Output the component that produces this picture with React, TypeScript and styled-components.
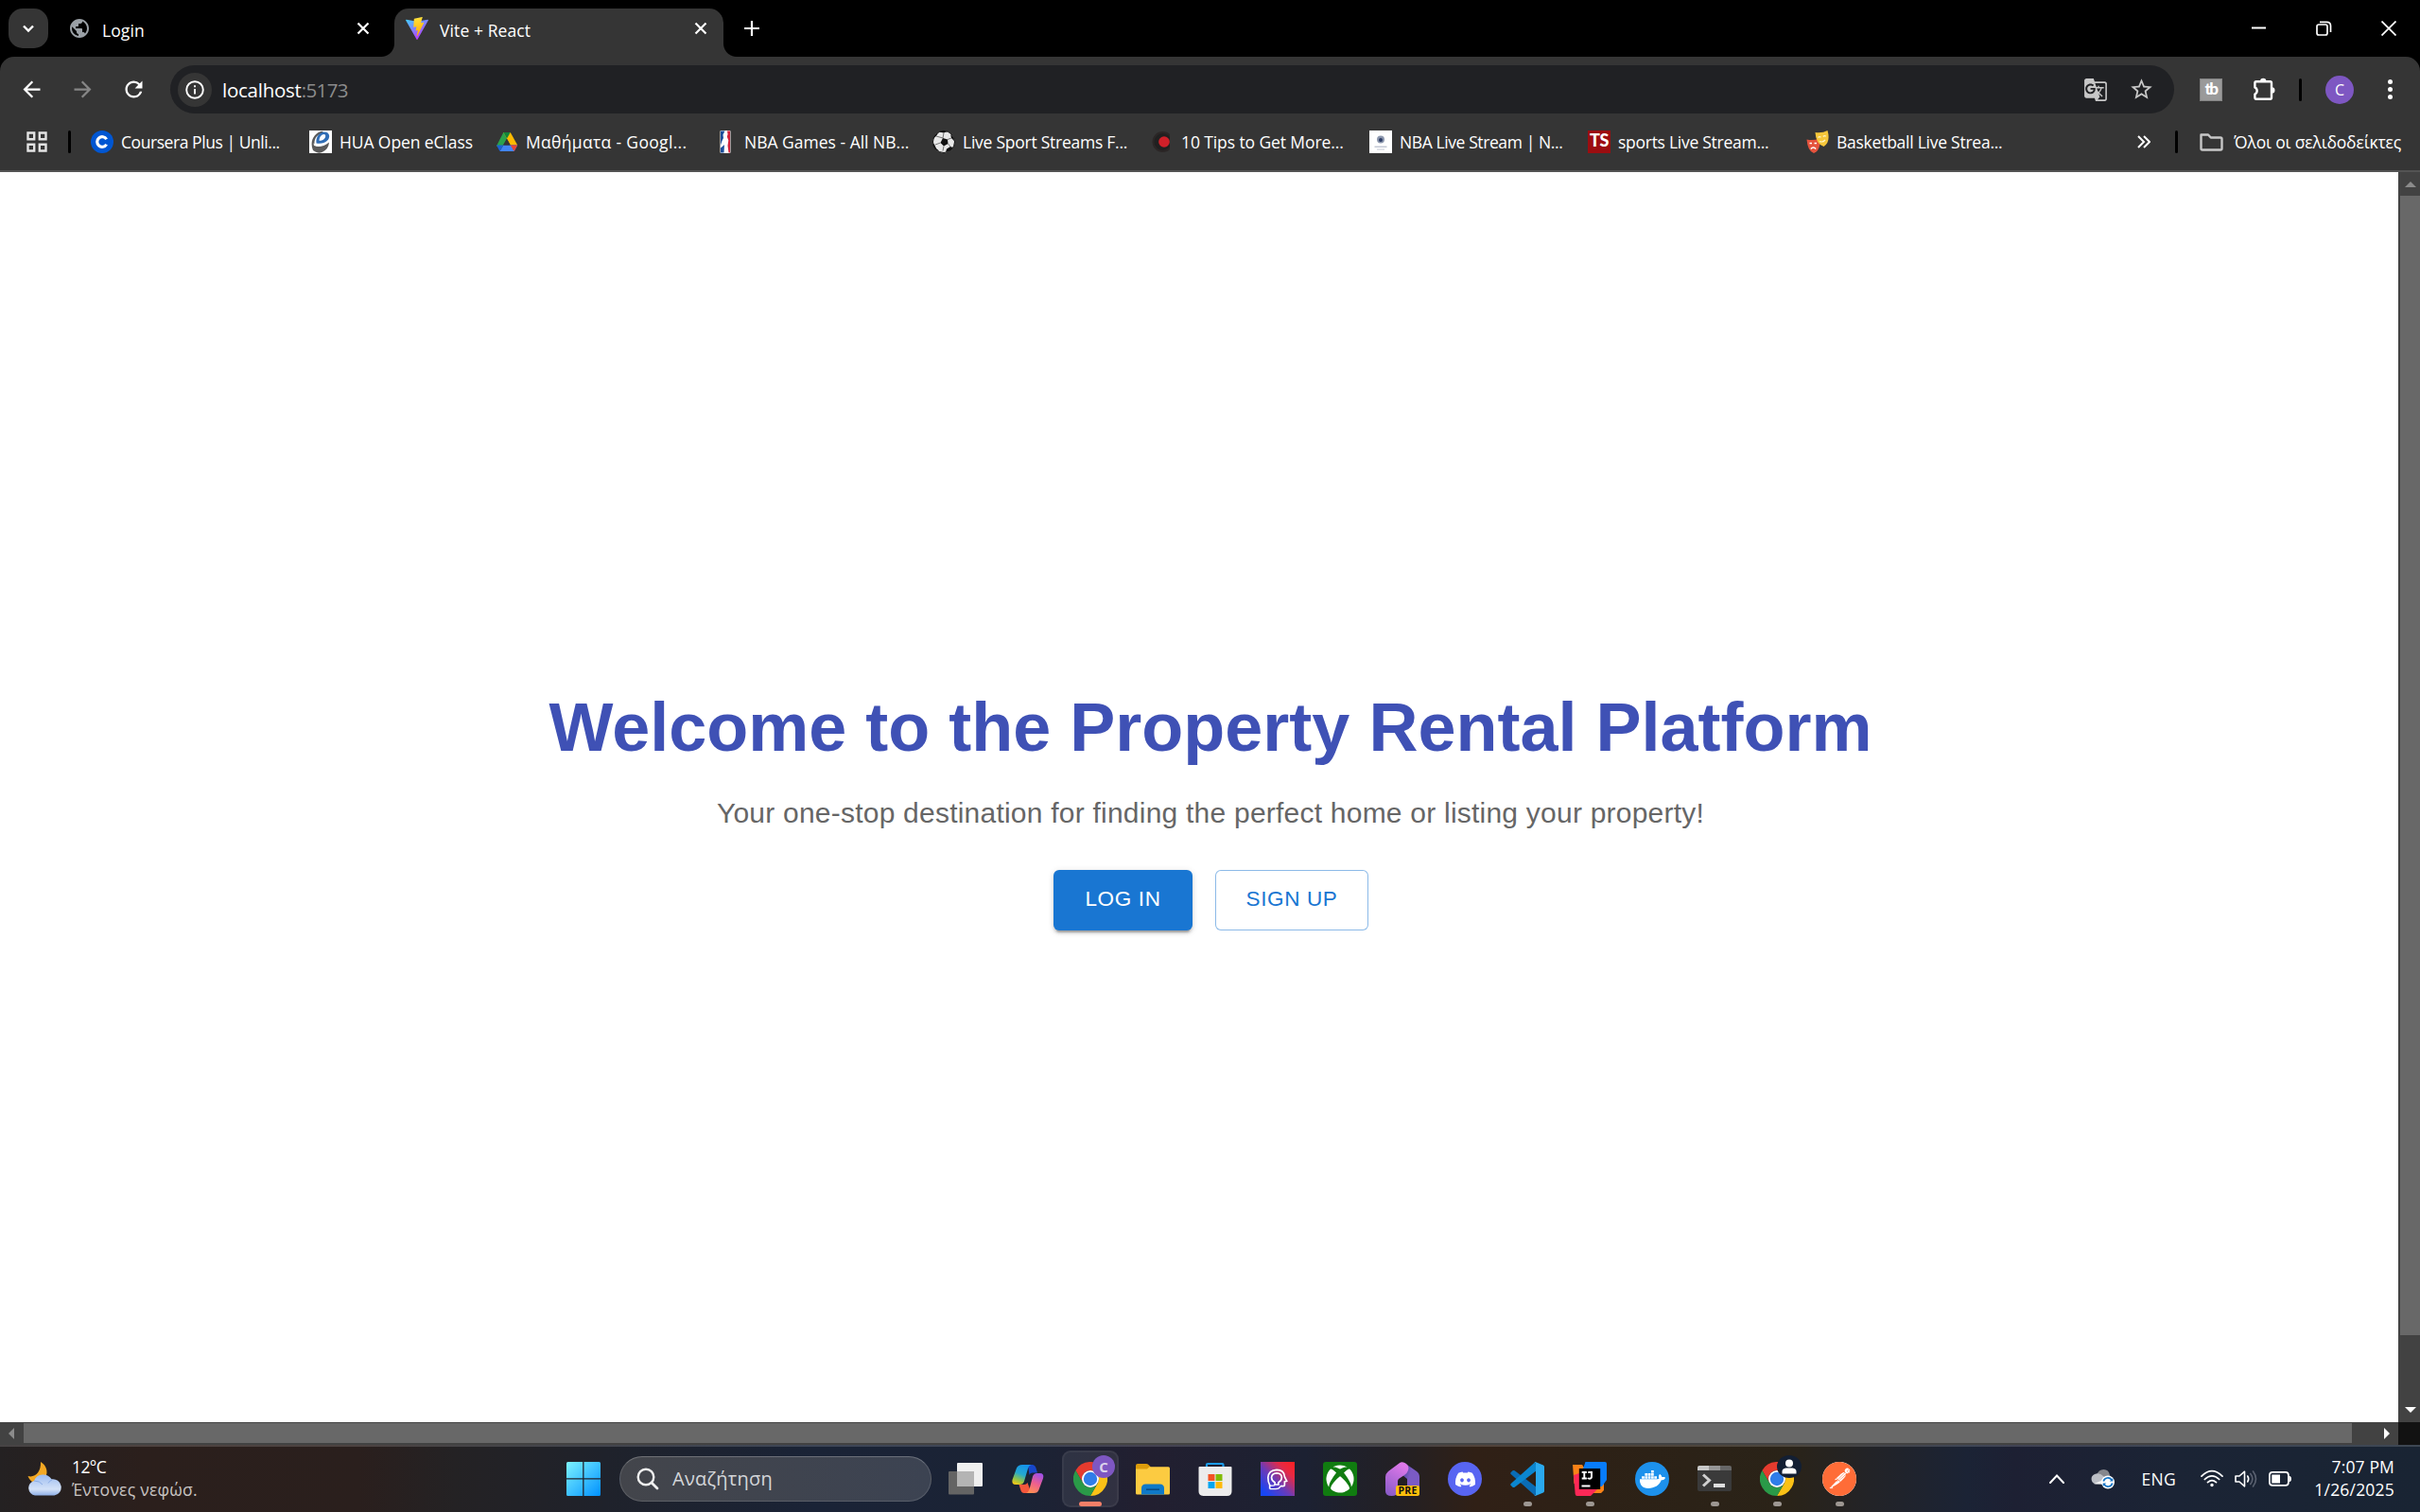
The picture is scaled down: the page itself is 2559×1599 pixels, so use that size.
import React from "react";
import styled, { createGlobalStyle, css } from "styled-components";
import { MdArrowBack, MdArrowForward, MdRefresh, MdPublic, MdGTranslate, MdStarBorder } from "react-icons/md";
import { FaDiscord, FaDocker, FaXbox } from "react-icons/fa";
import { SiPostman } from "react-icons/si";

const GlobalStyle = createGlobalStyle`
  * { box-sizing: border-box; }
  html, body { margin: 0; height: 100%; overflow: hidden; background: #000; }
  svg { display: block; flex: none; }
`;

const ui = `"Open Sans", "Noto Sans", sans-serif`;
const chromeBg = "#353535";

const Screen = styled.div`
  width: 2559px;
  height: 1599px;
  display: flex;
  flex-direction: column;
  overflow: hidden;
  font-family: ${ui};
  color: #fff;
`;

/* Tab strip */
const TabStrip = styled.header`
  height: 60px;
  flex: none;
  display: flex;
  align-items: flex-end;
  padding-left: 9px;
  background: #000;
`;
const TabSearch = styled.button`
  width: 42px;
  height: 42px;
  margin: 0 9px 9px 0;
  padding: 0;
  border: 0;
  border-radius: 15px;
  background: ${chromeBg};
  display: flex;
  align-items: center;
  justify-content: center;
`;
const Tab = styled.div<{ $active?: boolean }>`
  position: relative;
  width: ${(p) => (p.$active ? 348 : 357)}px;
  height: 51px;
  padding: 0 ${(p) => (p.$active ? 12 : 21)}px 9px 12px;
  display: flex;
  align-items: center;
  gap: 12px;
  ${(p) =>
    p.$active &&
    css`
      background: ${chromeBg};
      border-radius: 15px 15px 0 0;
      &::before,
      &::after {
        content: "";
        position: absolute;
        bottom: 0;
        width: 14px;
        height: 14px;
      }
      &::before {
        left: -14px;
        background: radial-gradient(circle at 0 0, transparent 13.5px, ${chromeBg} 14.5px);
      }
      &::after {
        right: -14px;
        background: radial-gradient(circle at 100% 0, transparent 13.5px, ${chromeBg} 14.5px);
      }
    `}
`;
const Label = styled.span<{ $track?: number; $size?: number; $color?: string }>`
  font-size: ${(p) => p.$size ?? 17.5}px;
  line-height: 24px;
  letter-spacing: ${(p) => p.$track ?? 0}px;
  color: ${(p) => p.$color ?? "#fff"};
  white-space: nowrap;
`;
const TabTitle = styled(Label)`
  flex: 1;
  padding-top: 3px;
`;
const NewTab = styled.div`
  height: 51px;
  padding: 9px 0 0 18px;
`;
const WindowControls = styled.div`
  margin-left: auto;
  height: 60px;
  display: flex;
  gap: 52px;
  padding: 22px 25px 0 0;
`;

/* Toolbar */
const ToolbarBack = styled.div`
  background: #000;
  flex: none;
`;
const Toolbar = styled.div`
  height: 69px;
  display: flex;
  align-items: center;
  padding-left: 20px;
  background: ${chromeBg};
  border-radius: 15px 15px 0 0;
`;
const NavButtons = styled.nav`
  display: flex;
  gap: 27px;
  width: 160px;
`;
const Omnibox = styled.div`
  width: 2119px;
  height: 51px;
  border-radius: 26px;
  background: #202124;
  display: flex;
  align-items: center;
  padding: 0 21px 0 8px;
`;
const SiteInfo = styled.span`
  width: 36px;
  height: 36px;
  border-radius: 50%;
  background: ${chromeBg};
  display: flex;
  align-items: center;
  justify-content: center;
  margin-right: 11px;
`;
const OmniActions = styled.div`
  margin-left: auto;
  display: flex;
  align-items: center;
  gap: 22px;
  color: #c7c7c7;
`;
const Extensions = styled.div`
  display: flex;
  align-items: center;
  margin-left: 27px;
`;
const Extension = styled.span`
  width: 24px;
  height: 24px;
  background: #9a9a9a;
  border: 1px solid #848484;
  color: #fff;
  font: 900 17px/20px "Lato", sans-serif;
  letter-spacing: -1.5px;
  text-align: center;
  margin-right: 32px;
`;
const Divider = styled.i<{ $gap: string }>`
  width: 3px;
  height: 24px;
  border-radius: 2px;
  background: #000;
  margin: ${(p) => p.$gap};
`;
const Avatar = styled.span<{ $size: number }>`
  width: ${(p) => p.$size}px;
  height: ${(p) => p.$size}px;
  border-radius: 50%;
  background: #7e57c2;
  color: #fff;
  font-size: 16px;
  line-height: ${(p) => p.$size}px;
  text-align: center;
  margin-right: 36px;
`;
const MenuDots = styled.span`
  display: flex;
  flex-direction: column;
  gap: 3px;
  &::before, &::after, i {
    content: "";
    width: 5px;
    height: 5px;
    border-radius: 50%;
    background: #fff;
  }
`;

/* Bookmarks */
const BookmarkBar = styled.div`
  height: 53px;
  flex: none;
  display: flex;
  align-items: center;
  padding: 0 0 9px 28px;
  background: ${chromeBg};
  border-bottom: 2px solid #545454;
`;
const Bookmark = styled.div<{ $width: number }>`
  width: ${(p) => p.$width}px;
  flex: none;
  display: flex;
  align-items: center;
  gap: 8px;
`;
const BarEnd = styled.div`
  margin-left: auto;
  display: flex;
  align-items: center;
  padding-right: 20px;
`;
const AllBookmarks = styled.div`
  display: flex;
  align-items: center;
  gap: 11px;
`;

/* Page */
const Viewport = styled.div`
  flex: 1;
  min-height: 0;
  display: grid;
  grid-template: 1322px 24px / 2536px 23px;
`;
const Page = styled.main`
  overflow: hidden;
  background: #fff;
`;
const Hero = styled.section`
  width: 2560px;
  padding-top: 544px;
  display: flex;
  flex-direction: column;
  align-items: center;
  font-family: "Liberation Sans", Arial, sans-serif;
`;
const Heading = styled.h1`
  margin: 0 0 24px;
  font-size: 72px;
  line-height: 86px;
  font-weight: 700;
  color: #3f51b5;
  white-space: nowrap;
`;
const Tagline = styled.p`
  margin: 0 0 36px;
  font-size: 30px;
  line-height: 48px;
  letter-spacing: 0.225px;
  color: #666;
  white-space: nowrap;
`;
const Actions = styled.div`
  display: flex;
  gap: 24px;
  padding-left: 1px;
`;
const Button = styled.button<{ $outlined?: boolean }>`
  height: 64px;
  width: ${(p) => (p.$outlined ? 162 : 147)}px;
  padding: 0 0 3px;
  font: 400 22.5px/39px "Liberation Sans", Arial, sans-serif;
  letter-spacing: 0.643px;
  border-radius: 6px;
  border: ${(p) => (p.$outlined ? "1px solid rgba(25, 118, 210, 0.5)" : "0")};
  background: ${(p) => (p.$outlined ? "#fff" : "#1976d2")};
  color: ${(p) => (p.$outlined ? "#1976d2" : "#fff")};
  box-shadow: ${(p) =>
    p.$outlined
      ? "none"
      : "0 4.5px 1.5px -3px rgba(0,0,0,.2), 0 3px 3px rgba(0,0,0,.14), 0 1.5px 7.5px rgba(0,0,0,.12)"};
`;
const VScroll = styled.div`
  background: #424242;
  display: flex;
  flex-direction: column;
  align-items: center;
  justify-content: space-between;
  padding: 10px 0 10px 2px;
`;
const VThumb = styled.i`
  width: 21px;
  height: 1205px;
  margin: 9px 0 auto;
  background: #686868;
`;
const HScroll = styled.div`
  background: #424242;
  display: flex;
  align-items: center;
  padding: 0 9px;
`;
const HThumb = styled.i`
  width: 2462px;
  height: 21px;
  margin: 0 auto 1px 10px;
  background: #686868;
`;
const Corner = styled.div`
  background: #121212;
`;

/* Taskbar */
const Taskbar = styled.footer`
  height: 71px;
  flex: none;
  display: flex;
  align-items: center;
  padding-bottom: 1px;
  border-top: 2px solid rgba(255, 255, 255, 0.16);
  background: linear-gradient(
    90deg,
    #242122 0,
    #2b1f1c 150px,
    #2a1f1d 380px,
    #242224 480px,
    #1f222b 640px,
    #1a2336 860px,
    #1b2335 1080px,
    #221f30 1215px,
    #1c2132 1380px,
    #232024 1480px,
    #302016 1560px,
    #2d2116 1680px,
    #2a2318 1890px,
    #232326 1970px,
    #1b2335 2080px,
    #1d2033 2130px,
    #1b2435 2300px,
    #192433 2559px
  );
  background-origin: border-box;
`;
const Weather = styled.div`
  width: 584px;
  padding-left: 29px;
  display: flex;
  align-items: center;
  gap: 10px;
`;
const Lines = styled.div<{ $end?: boolean }>`
  display: flex;
  flex-direction: column;
  align-items: ${(p) => (p.$end ? "flex-end" : "flex-start")};
  padding-bottom: 2px;
`;
const Slot = styled.div`
  position: relative;
  width: 66px;
  height: 68px;
  flex: none;
  display: flex;
  align-items: center;
  justify-content: center;
`;
const ActiveTile = styled(Slot)`
  width: 60px;
  height: 60px;
  margin: 0 3px;
  border-radius: 9px;
  background: rgba(255, 255, 255, 0.08);
  border: 2px solid rgba(255, 255, 255, 0.05);
`;
const Running = styled.i<{ $active?: boolean }>`
  position: absolute;
  bottom: ${(p) => (p.$active ? -1 : 5)}px;
  width: ${(p) => (p.$active ? 24 : 9)}px;
  height: 5px;
  border-radius: 3px;
  background: ${(p) => (p.$active ? "#f47f68" : "#9d9792")};
`;
const Badge = styled.span<{ $dark?: boolean; $inTile?: boolean }>`
  position: absolute;
  right: ${(p) => (p.$inTile ? 2 : 7)}px;
  top: ${(p) => (p.$inTile ? 3 : 9)}px;
  width: ${(p) => (p.$dark ? 26 : 24)}px;
  height: 24px;
  border-radius: 50%;
  background: ${(p) => (p.$dark ? "#131f33" : "#7e57c2")};
  color: #dcd3ec;
  font: 700 15px/24px ${ui};
  text-align: center;
  display: flex;
  justify-content: center;
`;
const Search = styled.div`
  width: 330px;
  height: 48px;
  margin: 0 3px 0 5px;
  padding: 0 17px;
  display: flex;
  align-items: center;
  gap: 14px;
  border-radius: 24px;
  border: 1.5px solid rgba(255, 255, 255, 0.14);
  border-top-color: rgba(255, 255, 255, 0.24);
  background: linear-gradient(90deg, #43454b, #3c4352);
`;
const AppTile = styled.span<{ $bg: string; $round?: boolean; $square?: boolean }>`
  width: 36px;
  height: 36px;
  flex: none;
  display: flex;
  align-items: center;
  justify-content: center;
  border-radius: ${(p) => (p.$round ? "50%" : p.$square ? "0" : "3px")};
  background: ${(p) => p.$bg};
  color: #fff;
`;
const Tray = styled.div`
  margin-left: auto;
  display: flex;
  align-items: center;
  gap: 28px;
  padding-right: 27px;
`;
const Language = styled(Label)`
  margin: 0 -2px 0 -1px;
`;
const TrayStatus = styled.div`
  display: flex;
  align-items: center;
  gap: 12px;
`;
const Clock = styled(Lines)`
  width: 80px;
`;

/* Glyphs */
const Cross = ({ size = 11, w = 2 }) => (
  <svg width={24} height={24} viewBox="-12 -12 24 24" stroke="#fff" strokeWidth={w}>
    <path d={`M${-size / 2} ${-size / 2}L${size / 2} ${size / 2}M${size / 2} ${-size / 2}L${-size / 2} ${size / 2}`} />
  </svg>
);

const ViteLogo = () => (
  <svg width={24} height={24} viewBox="0 0 256 257">
    <defs>
      <linearGradient id="va" x1="0" x2=".6" y1="0" y2="1">
        <stop offset="0" stopColor="#41D1FF" />
        <stop offset="1" stopColor="#BD34FE" />
      </linearGradient>
      <linearGradient id="vb" x1=".4" x2=".5" y1="0" y2="1">
        <stop offset="0" stopColor="#FFEA83" />
        <stop offset=".08" stopColor="#FFDD35" />
        <stop offset="1" stopColor="#FFA800" />
      </linearGradient>
    </defs>
    <path fill="url(#va)" d="M255.153 37.938L134.897 252.976c-2.483 4.44-8.862 4.466-11.382.048L.875 37.958c-2.746-4.814 1.371-10.646 6.827-9.67l120.385 21.517a6.537 6.537 0 0 0 2.322-.004l117.867-21.483c5.438-.991 9.574 4.796 6.877 9.62Z" />
    <path fill="url(#vb)" d="M185.432.063L96.44 17.501a3.268 3.268 0 0 0-2.634 3.014l-5.474 92.456a3.268 3.268 0 0 0 3.997 3.378l24.777-5.718c2.318-.535 4.413 1.507 3.936 3.838l-7.361 36.047c-.495 2.426 1.782 4.5 4.151 3.78l15.304-4.649c2.372-.72 4.652 1.36 4.15 3.788l-11.698 56.621c-.732 3.542 3.979 5.473 5.943 2.437l1.313-2.028l72.516-144.72c1.215-2.423-.88-5.186-3.54-4.672l-25.505 4.922c-2.396.462-4.435-1.77-3.759-4.114l16.646-57.705c.677-2.35-1.37-4.583-3.769-4.113Z" />
  </svg>
);

const ChromeLogo = () => (
  <svg width={36} height={36} viewBox="0 0 36 36">
    <path fill="#e53b2e" d="M18 9H33.6A18 18 0 0 0 2.4 9L10.2 22.5A9 9 0 0 1 18 9Z" />
    <path fill="#fbc116" d="M33.6 9A18 18 0 0 1 18 36L25.8 22.5A9 9 0 0 0 18 9Z" />
    <path fill="#2a9a48" d="M2.4 9A18 18 0 0 0 18 36L25.8 22.5A9 9 0 0 1 10.2 22.5Z" />
    <circle cx="18" cy="18" r="9" fill="#fff" />
    <circle cx="18" cy="18" r="7.2" fill="#2f7de9" />
  </svg>
);

const PuzzleIcon = () => (
  <svg width={26} height={26} viewBox="0 0 26 26" fill="none" stroke="#fff" strokeWidth={2.4}>
    <path d="M3.8 4.3H18.6q1.400 0 1.400 1.400V21.300q0 1.400-1.400 1.400H3.800q-1.400 0-1.400-1.400V17.600a4 4 0 0 0 0-7.200V5.700q0-1.400 1.400-1.400Z" strokeLinejoin="round" />
    <path d="M8 4a3.200 3.200 0 0 1 6.400 0ZM20.300 10.200a3.200 3.200 0 0 1 0 6.400Z" fill="#fff" stroke="none" />
  </svg>
);

const CourseraIcon = () => (
  <svg width={24} height={24} viewBox="0 0 24 24">
    <circle cx="12" cy="12" r="12" fill="#0056d2" />
    <path d="M16.6 9.3A5.3 5.3 0 1 0 16.6 14.7" fill="none" stroke="#fff" strokeWidth="3.2" />
  </svg>
);
const EclassIcon = () => (
  <svg width={24} height={24} viewBox="0 0 24 24">
    <path fill="#fff" d="M0 0h24v24H0z" />
    <path fill="#5a5a5a" d="M4 21C0 12 5 2 14 .8l1 1.500C8 4 5 9 5.500 15q1 2 4 2 6 0 11.500-4.500Q20.500 20 13.500 23q-4 1.500-7-.500Z" />
    <path fill="#2f6db5" d="M7.500 13.500C6.500 7 11 1.500 16 1.500c6 .3 6.500 6 3 9.300-2.500 2.300-6.500 3.500-11.500 2.700Z" />
    <path fill="#fff" d="M10.500 10.800C10.500 7 13 4 15.500 4c2.800.300 1.800 4-.300 5.500-1.300.9-2.700 1.300-4.700 1.300Z" />
    <path fill="#fff" d="M4.500 13.500q4 3 14.500-.500-6 5-14 3Z" />
  </svg>
);
const DriveIcon = () => (
  <svg width={24} height={24} viewBox="0 0 24 24">
    <path fill="#2ba24c" d="M8.300 2h7.400l-3.700 6.500-5.900 10.200L1 16.500Z" />
    <path fill="#ffba00" d="M8.300 2h7.400l7.500 13.500h-7.500Z" />
    <path fill="#11833a" d="M8.300 2h7.400L12 8.500Z" />
    <path fill="#4285f4" d="M8.300 15.500h14.900L19.700 22H4.500Z" />
    <path fill="#1c62d3" d="M1 15.500h7.300L4.500 22Z" />
    <path fill="#ea4335" d="M15.700 15.500h7.500L19.700 22Z" />
    <path fill={chromeBg} d="M12 8.800l3.700 6.700H8.300Z" />
  </svg>
);
const NbaIcon = () => (
  <svg width={24} height={24} viewBox="0 0 24 24">
    <rect x="6.500" width="11" height="24" rx="1" fill="#fff" />
    <path fill="#1d4f9c" d="M7 .500h4.500L9.500 4.500 10 8 8.500 11 7 15.500ZM7 18.500l3-2.500 1-1-.500 8.500H7Z" />
    <path fill="#d5203a" d="M14 .500h3v23h-1.500L14.500 16l.8-5.500-1.500-4 .8-2.500Z" />
  </svg>
);
const BallIcon = () => (
  <svg width={24} height={24} viewBox="0 0 24 24">
    <circle cx="12" cy="12" r="11.500" fill="#e8e8e8" stroke="#111" />
    <path fill="#111" d="M11 8l5 1.500.500 4.500-4.500 2.500-3.500-3.500ZM7 1.500l5 1 3.500-1.500q-4-1.500-8.500.5ZM.8 9l3-3L6 3 3 4.500Q1 7 .8 9ZM19 4l1 4 3 3q0-4.500-4-7ZM2 14.500l2 4.500 3 2.500-4-1.500q-2.500-3-2.500-6ZM15 19.500l4-2.500 2.500 1-3 3.500-4.500 1.500Z" />
    <path fill="none" stroke="#666" strokeWidth=".9" d="M12 2.500L11 8M16 9.500l4-1.500M16.500 14l2.500 3M12 16.500l-1 5M8.500 13L3 15M4 6l7 2" />
  </svg>
);
const RecordIcon = () => (
  <svg width={24} height={24} viewBox="0 0 24 24">
    <circle cx="12.500" cy="12" r="10" fill="#202020" stroke="#2b2626" strokeWidth="2" />
    <circle cx="14" cy="12" r="5.800" fill="#cf2029" />
    <path fill={chromeBg} d="M20 0h4v24h-4z" />
  </svg>
);
const CrestIcon = () => (
  <svg width={24} height={24} viewBox="0 0 24 24">
    <path fill="#fff" d="M0 0h24v24H0z" />
    <circle cx="12" cy="9.500" r="4" fill="#8c97ad" />
    <circle cx="12" cy="10" r="2" fill="#2d3d66" />
    <path fill="#c3c8d4" d="M5.500 16.500h13v1.500h-13zM8 19.500h8v1H8z" />
  </svg>
);
const TsTile = styled.span`
  width: 24px;
  height: 24px;
  flex: none;
  background: #9b0d10;
  color: #fff;
  font: 900 18px/20px "Lato", sans-serif;
  letter-spacing: -0.5px;
  text-align: center;
`;
const MasksIcon = () => (
  <svg width={24} height={24} viewBox="0 0 24 24">
    <path fill="#e5533d" d="M.5 9.500q7.500 1.500 12.500-1l1.500 6Q13 22.500 8 24 1.500 22 .5 9.500Z" />
    <path fill="#f5c63a" d="M9.500 2Q17 3 22.500 0 26 12 18.500 17 10 14 9.500 2Z" />
    <path d="M12.500 7.500q1.500-1.500 3-.3M17.800 6.500q1.500-1.500 3-.3M14 11.500q3.500 1.500 6-1.500" fill="none" stroke="#fff3c4" strokeWidth="1.200" />
    <path d="M3.500 13.500h2.500M8.500 13.500H11M4.800 19.500q2.700-3 5.400 0" fill="none" stroke="#fff" strokeWidth="1.500" />
  </svg>
);

const WeatherIcon = () => (
  <svg width={37} height={36} viewBox="0 0 37 36">
    <defs>
      <linearGradient id="cl" x1="0" x2="0" y1="0" y2="1">
        <stop offset="0" stopColor="#9dbcf0" />
        <stop offset=".7" stopColor="#d4e2f8" />
        <stop offset="1" stopColor="#8eaee6" />
      </linearGradient>
    </defs>
    <path fill="#f3a823" d="M14 0c7 4 9 13 3 19-5 5-13 5-16.500-4C8 17 14.500 11 14 0Z" />
    <path fill="url(#cl)" d="M8 35.500a8 8 0 0 1-1-15.600A10.500 10.500 0 0 1 25.500 18.300 8.700 8.700 0 1 1 28.500 35.500Z" />
    <path fill="none" stroke="#7ea2e0" strokeWidth=".8" d="M22 22.500a8 8 0 0 1 4-3.600M7 20q6 0 9 4" />
  </svg>
);
const WindowsLogo = () => (
  <svg width={36} height={36} viewBox="0 0 36 36">
    <defs>
      <linearGradient id="win" gradientUnits="userSpaceOnUse" x1="0" y1="0" x2="36" y2="36">
        <stop offset="0" stopColor="#7df3ff" />
        <stop offset="1" stopColor="#0091ff" />
      </linearGradient>
    </defs>
    <path fill="url(#win)" d="M1.500 0h15.700v17.200H0V1.500Q0 0 1.500 0ZM18.500 0h16q1.500 0 1.500 1.500v15.700H18.500ZM0 18.500h17.200V36H1.500Q0 36 0 34.500ZM18.500 18.500H36v16q0 1.500-1.500 1.500h-16Z" />
  </svg>
);
const TaskView = () => (
  <svg width={36} height={36} viewBox="0 0 36 36">
    <rect x="9" y="1" width="27" height="25" rx="1" fill="#efefef" />
    <rect x="0" y="10" width="27" height="24.500" rx="1" fill="#646464" />
    <path fill="#b4b4b4" d="M9 10h18v16H9z" />
  </svg>
);
const Copilot = () => (
  <svg width={36} height={36} viewBox="0 0 36 36">
    <defs>
      <linearGradient id="cp1" x1=".6" x2=".2" y1="0" y2="1">
        <stop offset="0" stopColor="#1593ea" />
        <stop offset=".45" stopColor="#25a9cf" />
        <stop offset=".75" stopColor="#8fc34a" />
        <stop offset="1" stopColor="#f5c816" />
      </linearGradient>
      <linearGradient id="cp2" x1=".7" x2=".3" y1="0" y2="1">
        <stop offset="0" stopColor="#a050e6" />
        <stop offset=".5" stopColor="#ee5f8f" />
        <stop offset="1" stopColor="#ff8f52" />
      </linearGradient>
    </defs>
    <path fill="#1746c8" d="M18 3h4.500q3 0 4 3.500L28 11.500h-5q-3 0-3.500 2.500Z" />
    <path fill="#f4573c" d="M8.500 24H14q2.500 0 3.500-2l3 8q-1 3-3 3H14q-2.800 0-3.600-3Z" />
    <path fill="url(#cp1)" d="M12 3h9.500q-2.500.7-3.500 4l-4 13.500Q13 24 9 24H5q-4.500 0-3.500-5L6 6.500Q7.500 3 12 3Z" />
    <path fill="url(#cp2)" d="M24 33h-8q2.500-.7 3.500-4L23 15.500q1-3.500 4.500-3.500h3q5 0 3.500 5.500L29.500 29.500Q28.500 33 24 33Z" />
  </svg>
);
const Folder = () => (
  <svg width={36} height={36} viewBox="0 0 36 36">
    <path fill="#dd9c0b" d="M0 4q0-2 2-2h9q1.500 0 2.500 1l2 2v5H0Z" />
    <path fill="#fccb41" d="M0 7.500h12l2.500-2.300H34.500Q36 5.200 36 6.700V33q0 1.500-1.500 1.500H1.500Q0 34.500 0 33Z" />
    <path fill="#0f79c8" d="M6 34.500V28q0-4.500 4.500-4.500h15Q30 23.500 30 28v6.500Z" />
    <path stroke="#0a4c86" strokeWidth="1.600" d="M11 29.200h14" />
  </svg>
);
const Store = () => (
  <svg width={36} height={36} viewBox="0 0 36 36">
    <path fill="none" stroke="#1b9be8" strokeWidth="2.200" d="M9 8V3q0-1 1-1h15.500q1 0 1 1v5" />
    <path fill="#ececec" d="M.5 6q0-1 1-1h33q1 0 1 1v25q0 5-5 5h-25q-5 0-5-5Z" />
    <path fill="#f35325" d="M10.500 13h7v7h-7z" />
    <path fill="#81bc06" d="M18.500 13h7v7h-7z" />
    <path fill="#05a6f0" d="M10.500 21h7v7h-7z" />
    <path fill="#ffba08" d="M18.500 21h7v7h-7z" />
  </svg>
);
const HeadIcon = () => (
  <svg width={24} height={24} viewBox="0 0 26 26" fill="none" stroke="#fff" strokeWidth="1.800">
    <path d="M4 24.500v-4.500Q2 17 2 11.500 2.500 3 12 2.500 20.500 2.500 21 10.500l2.500 5-2.500.7v3.500q0 1.500-2 1.500h-3" />
    <path d="M9.800 19.500v-2.500Q6 15 6 11.300 6.500 6.500 12 6.300q5.500.2 5.700 5 0 3.700-3.700 5.700v2.500Z" />
    <path d="M4 20.500q5 1 5.800-1M4 24.500h7q4 0 5-3" strokeWidth="1.400" />
  </svg>
);
const HouseMark = () => (
  <svg width={36} height={36} viewBox="0 0 36 36">
    <defs>
      <linearGradient id="hm" x1=".6" x2=".2" y1="0" y2="1">
        <stop offset="0" stopColor="#e079ea" />
        <stop offset="1" stopColor="#8a5bc8" />
      </linearGradient>
      <linearGradient id="hm2" x1="0" x2="1" y1="0" y2=".5">
        <stop offset="0" stopColor="#45408f" />
        <stop offset=".5" stopColor="#7b5bc4" />
      </linearGradient>
    </defs>
    <path fill="url(#hm2)" d="M20 1l13 9q3 2 3 6v19H23V18l-5-4Z" />
    <path fill="url(#hm)" d="M0 31V16q0-3.500 3-6L14.500 1.500Q18-1 22 2t1.500 8q-.5 2-3.500 4l-6 4q-1 1-1 3v10q0 5-6.500 5T0 31Z" />
  </svg>
);
const PreTag = styled.span`
  position: absolute;
  right: 15px;
  bottom: 16px;
  width: 25px;
  height: 11px;
  border-radius: 2px;
  background: #fdbf0b;
  color: #111;
  font: 700 10.5px/11px ${ui};
  letter-spacing: 0.2px;
  text-align: center;
`;
const VsCode = () => (
  <svg width={36} height={36} viewBox="0 0 36 36">
    <path fill="#0a6cb5" d="M.5 11.200l2-1.900q1-.8 2.200 0L28 27l-1.500 9L.7 13q-.8-.9-.2-1.800Z" />
    <path fill="#0b86cf" d="M.5 24.800l2 1.900q1 .8 2.200 0L28 9 26.500 0 .7 23q-.8.9-.2 1.800Z" />
    <path fill="#2aa9ee" d="M26.500 0L35 3.600q1 .5 1 1.700v25.400q0 1.200-1 1.700L26.500 36q-1 0-1-.5 1.500.2 1.500-1.500V2Q27 .3 25.500.5q0-.5 1-.5Z" />
  </svg>
);
const Idea = () => (
  <svg width={36} height={36} viewBox="0 0 36 36">
    <path fill="#fb8217" d="M0 3h10l4 6-8 14H1.500ZM22 20h11v10l-3 3h-9Z" />
    <path fill="#087cfa" d="M13.500 0H34q2 0 2 2v17l-5 7H18L11 7Z" />
    <path fill="#fe2857" d="M1 14l6-2 19 17-7 7H4.500Q3 36 2.700 34Z" />
    <path fill="#000" d="M6.800 7h22.400v22H6.800z" />
    <path stroke="#fff" strokeWidth="1.900" fill="none" d="M9.500 25.500h9M9.700 11h5.200M12.300 11v6.500M9.700 17.500h5.200M16.300 11h3.700v4.500q0 2.200-2.200 2.200-1.300 0-1.900-.7" />
  </svg>
);
const Terminal = () => (
  <svg width={36} height={36} viewBox="0 0 36 36">
    <path fill="#3a3a3a" d="M0 9h36v20q0 2-2 2H2q-2 0-2-2Z" />
    <path fill="#c8c8c8" d="M0 6q0-2 2-2h10v5H0Z" />
    <path fill="#969696" d="M12 4h12v5H12z" />
    <path fill="#676767" d="M24 4h10q2 0 2 2v3H24Z" />
    <path d="M6 13.500l6.500 6-6.500 6" fill="none" stroke="#cfcfcf" strokeWidth="3" />
    <path fill="#dedede" d="M17 23h12v4H17z" />
  </svg>
);
const CloudSync = () => (
  <svg width={26} height={22} viewBox="0 0 26 22">
    <path fill="#85878d" d="M6 7Q8 1 13.500 1T20 7l2 5H6Z" />
    <path fill="#bcbfc6" d="M5 16.500A5.500 5.500 0 0 1 4 6q5-2 9 2l5 4v4.500Z" />
    <path fill="#f3f3f3" d="M3 16.300L14 11.500l3 5Z" />
    <circle cx="18" cy="14.500" r="7" fill="#fff" />
    <path fill="none" stroke="#1272c4" strokeWidth="1.700" d="M13.300 13.500a4.800 4.800 0 0 1 8.600-1.500M22.700 15.500a4.800 4.800 0 0 1-8.600 1.500" />
    <path fill="#1272c4" d="M23.300 10v3.500h-3.500zM12.700 19v-3.500h3.500z" />
  </svg>
);
const Wifi = () => (
  <svg width={24} height={20} viewBox="0 0 24 20" fill="none" stroke="#fff" strokeWidth="1.700" strokeLinecap="round">
    <path d="M1 7.200Q12-3.800 23 7.200M4.300 10.500q7.700-7.300 15.400 0M7.500 13.700q4.500-4.200 9 0" />
    <circle cx="12" cy="16.500" r="1.700" fill="#fff" stroke="none" />
  </svg>
);
const Volume = () => (
  <svg width={24} height={22} viewBox="0 0 24 22" fill="none" stroke="#fff" strokeWidth="1.600" strokeLinejoin="round" strokeLinecap="round">
    <path d="M1 8v6h4l5.500 4.800V3.200L5 8ZM13.700 8q2 3 0 6" />
    <path d="M16.700 5.500q4.300 5.500 0 11M19.500 3q6 8 0 16" stroke="#5a6170" />
  </svg>
);
const Battery = () => (
  <svg width={25} height={16} viewBox="0 0 25 16">
    <rect x=".9" y=".9" width="20" height="14" rx="3.200" fill="none" stroke="#fff" strokeWidth="1.700" />
    <path fill="#fff" d="M3.300 3.500h8.700v9H3.300zM21.500 5h1q1.500.5 1.500 3t-1.500 3h-1z" />
  </svg>
);

const bookmarks: { icon: React.ReactNode; title: string; width: number; track: number }[] = [
  { icon: <CourseraIcon />, title: "Coursera Plus | Unli...", width: 231, track: -0.44 },
  { icon: <EclassIcon />, title: "HUA Open eClass", width: 197, track: -0.1 },
  { icon: <DriveIcon />, title: "Μαθήματα - Googl...", width: 231, track: 0.33 },
  { icon: <NbaIcon />, title: "NBA Games - All NB...", width: 231, track: 0 },
  { icon: <BallIcon />, title: "Live Sport Streams F...", width: 231, track: -0.25 },
  { icon: <RecordIcon />, title: "10 Tips to Get More...", width: 231, track: -0.1 },
  { icon: <CrestIcon />, title: "NBA Live Stream | N...", width: 231, track: -0.4 },
  { icon: <TsTile>TS</TsTile>, title: "sports Live Stream...", width: 231, track: -0.27 },
  { icon: <MasksIcon />, title: "Basketball Live Strea...", width: 231, track: -0.25 },
];

export default function App() {
  return (
    <Screen>
      <GlobalStyle />
      <TabStrip>
        <TabSearch>
          <svg width={14} height={14} viewBox="0 0 14 14" fill="none" stroke="#fff" strokeWidth="2.400">
            <path d="M2 4.500l5 5 5-5" />
          </svg>
        </TabSearch>
        <Tab>
          <MdPublic size={24} color="#9aa0a6" />
          <TabTitle $track={0.1}>Login</TabTitle>
          <Cross size={11} w={2.2} />
        </Tab>
        <Tab $active>
          <ViteLogo />
          <TabTitle $track={0.1}>Vite + React</TabTitle>
          <Cross size={11} w={2.2} />
        </Tab>
        <NewTab>
          <svg width={24} height={24} viewBox="-12 -12 24 24" stroke="#fff" strokeWidth="2.200">
            <path d="M-8 0H8M0-8V8" />
          </svg>
        </NewTab>
        <WindowControls>
          <svg width={16} height={16} viewBox="0 0 16 16"><path d="M0 7.500h15" stroke="#fff" strokeWidth="2" /></svg>
          <svg width={17} height={16} viewBox="0 0 17 16" fill="none" stroke="#fff" strokeWidth="1.700">
            <rect x="1" y="4" width="11" height="11" rx="2" />
            <path d="M4 1.300h7.500q4 0 4 4V12" />
          </svg>
          <svg width={16} height={16} viewBox="0 0 16 16"><path d="M.5.5l15 15M15.500.5l-15 15" stroke="#fff" strokeWidth="1.700" /></svg>
        </WindowControls>
      </TabStrip>

      <ToolbarBack>
        <Toolbar>
          <NavButtons>
            <MdArrowBack size={27} />
            <MdArrowForward size={27} color="#868686" />
            <MdRefresh size={27} />
          </NavButtons>
          <Omnibox>
            <SiteInfo>
              <svg width={20} height={20} viewBox="0 0 20 20" fill="none" stroke="#fff" strokeWidth="1.900">
                <circle cx="10" cy="10" r="8.800" />
                <path d="M10 9v5.500M10 5.300v2" />
              </svg>
            </SiteInfo>
            <Label $size={20.5} $track={-0.25}>localhost</Label>
            <Label $size={20.5} $track={-0.6} $color="#8c8c8c">:5173</Label>
            <OmniActions>
              <MdGTranslate size={26} />
              <MdStarBorder size={27} />
            </OmniActions>
          </Omnibox>
          <Extensions>
            <Extension>tb</Extension>
            <PuzzleIcon />
            <Divider $gap="0 25px 0 23px" />
            <Avatar $size={30}>C</Avatar>
            <MenuDots><i /></MenuDots>
          </Extensions>
        </Toolbar>
      </ToolbarBack>

      <BookmarkBar>
        <svg width={22} height={22} viewBox="0 0 22 22" fill="none" stroke="#e3e3e3" strokeWidth="2.400">
          <path d="M1.500 1.500h6.700v6.700H1.500zM13.800 1.500h6.700v6.700h-6.700zM1.500 13.800h6.700v6.700H1.500zM13.800 13.800h6.700v6.700h-6.700z" />
        </svg>
        <Divider $gap="0 21px 0 22px" />
        {bookmarks.map((b) => (
          <Bookmark key={b.title} $width={b.width}>
            {b.icon}
            <Label $track={b.track}>{b.title}</Label>
          </Bookmark>
        ))}
        <BarEnd>
          <svg width={14} height={14} viewBox="0 0 14 14" fill="none" stroke="#fff" strokeWidth="2">
            <path d="M1 1l6 6-6 6M7 1l6 6-6 6" />
          </svg>
          <Divider $gap="0 23px 0 26px" />
          <AllBookmarks>
            <svg width={25} height={19} viewBox="0 0 25 19" fill="none" stroke="#c7c7c7" strokeWidth="2.400" strokeLinejoin="round">
              <path d="M1.500 1.500h7.500l2.800 3H22q1.500 0 1.500 1.500v10q0 1.500-1.500 1.500H3q-1.500 0-1.500-1.500Z" />
            </svg>
            <Label $track={-0.17}>Όλοι οι σελιδοδείκτες</Label>
          </AllBookmarks>
        </BarEnd>
      </BookmarkBar>

      <Viewport>
        <Page>
          <Hero>
            <Heading>Welcome to the Property Rental Platform</Heading>
            <Tagline>Your one-stop destination for finding the perfect home or listing your property!</Tagline>
            <Actions>
              <Button>LOG IN</Button>
              <Button $outlined>SIGN UP</Button>
            </Actions>
          </Hero>
        </Page>
        <VScroll>
          <svg width={12} height={6} viewBox="0 0 12 6"><path fill="#8b8b8b" d="M0 6L6 0l6 6Z" /></svg>
          <VThumb />
          <svg width={12} height={6} viewBox="0 0 12 6"><path fill="#fff" d="M0 0l6 6 6-6Z" /></svg>
        </VScroll>
        <HScroll>
          <svg width={6} height={12} viewBox="0 0 6 12"><path fill="#8b8b8b" d="M6 0L0 6l6 6Z" /></svg>
          <HThumb />
          <svg width={6} height={12} viewBox="0 0 6 12"><path fill="#fff" d="M0 0l6 6-6 6Z" /></svg>
        </HScroll>
        <Corner />
      </Viewport>

      <Taskbar>
        <Weather>
          <WeatherIcon />
          <Lines>
            <Label $track={-0.6}>12°C</Label>
            <Label $track={0.25} $color="#c8c4c2">Έντονες νεφώσ.</Label>
          </Lines>
        </Weather>
        <Slot><WindowsLogo /></Slot>
        <Search>
          <svg width={24} height={24} viewBox="0 0 24 24" fill="none" stroke="#f0f0f0" strokeWidth="2.400" strokeLinecap="round">
            <circle cx="10" cy="10" r="8.300" />
            <path d="M16 16l6 6" strokeWidth="2.800" />
          </svg>
          <Label $size={20} $track={0.25} $color="#d3d5d9">Αναζήτηση</Label>
        </Search>
        <Slot><TaskView /></Slot>
        <Slot><Copilot /></Slot>
        <ActiveTile>
          <ChromeLogo />
          <Badge $inTile>C</Badge>
          <Running $active />
        </ActiveTile>
        <Slot><Folder /></Slot>
        <Slot><Store /></Slot>
        <Slot><AppTile $square $bg="linear-gradient(45deg, #1746f5 10%, #6b3bb8 45%, #e62a45 75%, #ff2020)"><HeadIcon /></AppTile></Slot>
        <Slot><AppTile $bg="#107c10"><FaXbox size={30} /></AppTile></Slot>
        <Slot><HouseMark /><PreTag>PRE</PreTag></Slot>
        <Slot><AppTile $round $bg="#5865f2"><FaDiscord size={23} /></AppTile></Slot>
        <Slot><VsCode /><Running /></Slot>
        <Slot><Idea /><Running /></Slot>
        <Slot><AppTile $round $bg="#1d91ec"><FaDocker size={27} /></AppTile></Slot>
        <Slot><Terminal /><Running /></Slot>
        <Slot>
          <ChromeLogo />
          <Badge $dark>
            <svg width={18} height={24} viewBox="0 0 18 24" fill="#fff">
              <circle cx="9" cy="8.500" r="4" />
              <path d="M1.500 19.500V17q0-3 4-3.500h7q4 .5 4 3.500v2.500Z" />
            </svg>
          </Badge>
          <Running />
        </Slot>
        <Slot><AppTile $round $bg="#fff"><SiPostman size={36} color="#ff6c37" /></AppTile><Running /></Slot>
        <Tray>
          <svg width={16} height={10} viewBox="0 0 16 10" fill="none" stroke="#fff" strokeWidth="2" strokeLinecap="round">
            <path d="M1 9l7-7.500L15 9" />
          </svg>
          <CloudSync />
          <Language $track={0.3}>ENG</Language>
          <TrayStatus>
            <Wifi />
            <Volume />
            <Battery />
          </TrayStatus>
          <Clock $end>
            <Label $track={0.15}>7:07 PM</Label>
            <Label $track={0.2}>1/26/2025</Label>
          </Clock>
        </Tray>
      </Taskbar>
    </Screen>
  );
}
